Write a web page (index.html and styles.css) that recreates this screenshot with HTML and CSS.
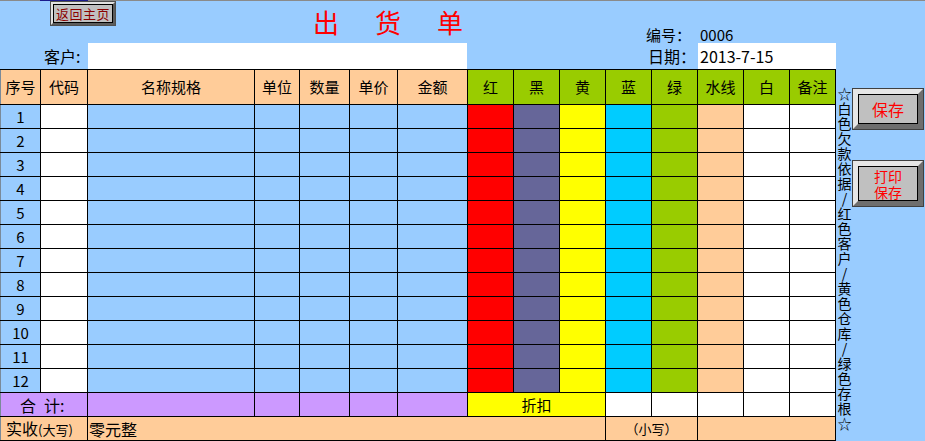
FILE: index.html
```html
<!DOCTYPE html>
<html lang="zh-CN">
<head>
<meta charset="utf-8">
<title>出货单</title>
<link rel="stylesheet" href="styles.css">
</head>
<body>
<div class="topline"><span class="navy"></span></div>
<div class="page">
  <div class="sheet">
    <div class="rowa">
      <div class="btn-home"><span class="face">返回主页</span></div>
      <div class="title">出货单</div>
      <div class="no"><span class="lab">编号：</span><span class="val">0006</span></div>
    </div>
    <div class="rowb">
      <div class="cust-lab">客户:</div>
      <div class="cust-box"></div>
      <div class="date-lab">日期：</div>
      <div class="date-box">2013-7-15</div>
    </div>
    <table class="grid">
      <colgroup>
        <col><col><col><col><col><col><col><col><col><col><col><col><col><col><col>
      </colgroup>
      <tr class="head">
        <td class="pc">序号</td><td class="pc">代码</td><td class="pc">名称规格</td><td class="pc">单位</td><td class="pc">数量</td><td class="pc">单价</td><td class="pc">金额</td>
        <td class="gr">红</td><td class="gr">黑</td><td class="gr">黄</td><td class="gr">蓝</td><td class="gr">绿</td><td class="gr">水线</td><td class="gr">白</td><td class="gr">备注</td>
      </tr>
      <tr><td class="bl num">1</td><td class="wh"></td><td class="bl"></td><td class="bl"></td><td class="bl"></td><td class="bl"></td><td class="bl"></td><td class="rd"></td><td class="dk"></td><td class="yl"></td><td class="cy"></td><td class="gr"></td><td class="pc"></td><td class="wh"></td><td class="wh"></td></tr>
      <tr><td class="bl num">2</td><td class="wh"></td><td class="bl"></td><td class="bl"></td><td class="bl"></td><td class="bl"></td><td class="bl"></td><td class="rd"></td><td class="dk"></td><td class="yl"></td><td class="cy"></td><td class="gr"></td><td class="pc"></td><td class="wh"></td><td class="wh"></td></tr>
      <tr><td class="bl num">3</td><td class="wh"></td><td class="bl"></td><td class="bl"></td><td class="bl"></td><td class="bl"></td><td class="bl"></td><td class="rd"></td><td class="dk"></td><td class="yl"></td><td class="cy"></td><td class="gr"></td><td class="pc"></td><td class="wh"></td><td class="wh"></td></tr>
      <tr><td class="bl num">4</td><td class="wh"></td><td class="bl"></td><td class="bl"></td><td class="bl"></td><td class="bl"></td><td class="bl"></td><td class="rd"></td><td class="dk"></td><td class="yl"></td><td class="cy"></td><td class="gr"></td><td class="pc"></td><td class="wh"></td><td class="wh"></td></tr>
      <tr><td class="bl num">5</td><td class="wh"></td><td class="bl"></td><td class="bl"></td><td class="bl"></td><td class="bl"></td><td class="bl"></td><td class="rd"></td><td class="dk"></td><td class="yl"></td><td class="cy"></td><td class="gr"></td><td class="pc"></td><td class="wh"></td><td class="wh"></td></tr>
      <tr><td class="bl num">6</td><td class="wh"></td><td class="bl"></td><td class="bl"></td><td class="bl"></td><td class="bl"></td><td class="bl"></td><td class="rd"></td><td class="dk"></td><td class="yl"></td><td class="cy"></td><td class="gr"></td><td class="pc"></td><td class="wh"></td><td class="wh"></td></tr>
      <tr><td class="bl num">7</td><td class="wh"></td><td class="bl"></td><td class="bl"></td><td class="bl"></td><td class="bl"></td><td class="bl"></td><td class="rd"></td><td class="dk"></td><td class="yl"></td><td class="cy"></td><td class="gr"></td><td class="pc"></td><td class="wh"></td><td class="wh"></td></tr>
      <tr><td class="bl num">8</td><td class="wh"></td><td class="bl"></td><td class="bl"></td><td class="bl"></td><td class="bl"></td><td class="bl"></td><td class="rd"></td><td class="dk"></td><td class="yl"></td><td class="cy"></td><td class="gr"></td><td class="pc"></td><td class="wh"></td><td class="wh"></td></tr>
      <tr><td class="bl num">9</td><td class="wh"></td><td class="bl"></td><td class="bl"></td><td class="bl"></td><td class="bl"></td><td class="bl"></td><td class="rd"></td><td class="dk"></td><td class="yl"></td><td class="cy"></td><td class="gr"></td><td class="pc"></td><td class="wh"></td><td class="wh"></td></tr>
      <tr><td class="bl num">10</td><td class="wh"></td><td class="bl"></td><td class="bl"></td><td class="bl"></td><td class="bl"></td><td class="bl"></td><td class="rd"></td><td class="dk"></td><td class="yl"></td><td class="cy"></td><td class="gr"></td><td class="pc"></td><td class="wh"></td><td class="wh"></td></tr>
      <tr><td class="bl num">11</td><td class="wh"></td><td class="bl"></td><td class="bl"></td><td class="bl"></td><td class="bl"></td><td class="bl"></td><td class="rd"></td><td class="dk"></td><td class="yl"></td><td class="cy"></td><td class="gr"></td><td class="pc"></td><td class="wh"></td><td class="wh"></td></tr>
      <tr><td class="bl num">12</td><td class="wh"></td><td class="bl"></td><td class="bl"></td><td class="bl"></td><td class="bl"></td><td class="bl"></td><td class="rd"></td><td class="dk"></td><td class="yl"></td><td class="cy"></td><td class="gr"></td><td class="pc"></td><td class="wh"></td><td class="wh"></td></tr>
      <tr class="total">
        <td colspan="2" class="pu sum">合&ensp;计:</td><td class="pu"></td><td class="pu"></td><td class="pu"></td><td class="pu"></td><td class="pu"></td>
        <td colspan="3" class="yl zk">折扣</td><td class="wh"></td><td class="wh"></td><td class="wh"></td><td class="wh"></td><td class="wh"></td>
      </tr>
      <tr class="pay">
        <td colspan="2" class="pc paylab">实收<span class="small">(大写)</span></td>
        <td colspan="8" class="pc words">零元整</td>
        <td colspan="2" class="pc lower">（小写）</td>
        <td colspan="3" class="pc"></td>
      </tr>
    </table>
  </div>
  <aside class="side">
    <div class="vtext">
      <span>☆</span><span>白</span><span>色</span><span>欠</span><span>款</span><span>依</span><span>据</span><span>/</span><span>红</span><span>色</span><span>客</span><span>户</span><span>/</span><span>黄</span><span>色</span><span>仓</span><span>库</span><span>/</span><span>绿</span><span>色</span><span>存</span><span>根</span><span>☆</span>
    </div>
    <div class="btns">
      <div class="bigbtn save"><span class="face">保存</span></div>
      <div class="bigbtn print"><span class="face">打印<br>保存</span></div>
    </div>
  </aside>
</div>
</body>
</html>
```
FILE: styles.css
```css
html, body {
  margin: 0;
  padding: 0;
}
body {
  background: #99ccff;
  font-family: "Noto Sans CJK SC", "Noto Sans", sans-serif;
  color: #000;
  width: 925px;
  height: 441px;
  overflow: hidden;
}
.topline {
  height: 1px;
  background: #8a8a8a;
  display: flex;
}
.navy {
  margin-left: 40px;
  width: 48px;
  background: #1a1a8c;
}
.page {
  display: flex;
}
.sheet {
  width: 836px;
  flex: none;
}
.rowa {
  height: 42px;
  display: flex;
  align-items: flex-start;
}
.btn-home {
  margin-left: 50px;
  width: 66px;
  height: 25px;
  box-sizing: border-box;
  border: 3px solid;
  border-color: #e2e2e2 #5c5c5c #5c5c5c #e2e2e2;
  outline: 1px solid #505050;
  outline-offset: -1px;
  display: flex;
}
.btn-home .face {
  flex: 1;
  background: #c0c0c0;
  border: 1px solid #000;
  color: #8b0000;
  font-size: 13px;
  line-height: 17px;
  text-align: center;
  letter-spacing: 0.5px;
}
.title {
  margin-left: 195px;
  margin-top: 7px;
  width: 335px;
  color: #ff0000;
  font-size: 26px;
  line-height: 28px;
  letter-spacing: 36px;
  padding-left: 2px;
  box-sizing: border-box;
}
.no {
  align-self: flex-end;
  font-size: 15px;
  line-height: 16px;
  display: flex;
}
.no .lab {
  width: 54px;
}
.rowb {
  height: 26px;
  display: flex;
}
.cust-lab {
  width: 44px;
  padding-left: 44px;
  font-size: 16px;
  line-height: 26px;
}
.cust-box {
  width: 379px;
  background: #fff;
}
.date-lab {
  margin-left: 181px;
  width: 50px;
  font-size: 16px;
  line-height: 26px;
}
.date-box {
  width: 136px;
  padding-left: 2px;
  background: #fff;
  font-size: 16px;
  line-height: 26px;
}
.grid {
  border-collapse: collapse;
  table-layout: fixed;
  width: 836px;
}
.grid col:nth-child(1) { width: 40px; }
.grid col:nth-child(2) { width: 47px; }
.grid col:nth-child(3) { width: 167px; }
.grid col:nth-child(4) { width: 45px; }
.grid col:nth-child(5) { width: 50px; }
.grid col:nth-child(6) { width: 48px; }
.grid col:nth-child(7) { width: 70px; }
.grid col:nth-child(n+8) { width: 46px; }
.grid td {
  border: 1px solid #000;
  padding: 0;
  height: 23px;
  font-size: 15px;
  line-height: 20px;
  text-align: center;
  white-space: nowrap;
  overflow: hidden;
}
.grid tr td:first-child {
  border-left-color: #7a8a9a;
}
.grid .head td {
  height: 34px;
}
.pc { background: #ffcc99; }
.gr { background: #99cc00; }
.bl { background: #99ccff; }
.wh { background: #ffffff; }
.rd { background: #ff0000; }
.dk { background: #666699; }
.yl { background: #ffff00; }
.cy { background: #00ccff; }
.pu { background: #cc99ff; }
.grid .sum {
  font-size: 16px;
  text-align: left;
  padding-left: 19px;
}
.grid .zk {
  font-size: 15px;
}
.grid .paylab {
  text-align: left;
  padding-left: 5px;
  font-size: 16px;
}
.small {
  font-size: 13px;
}
.grid .words {
  text-align: left;
  padding-left: 1px;
  font-size: 16px;
}
.grid .lower {
  font-size: 13px;
}
.side {
  width: 89px;
  flex: none;
  display: flex;
}
.vtext {
  margin-top: 85px;
  margin-left: 1px;
  width: 15px;
  flex: none;
  display: flex;
  flex-direction: column;
  font-size: 14px;
  line-height: 15px;
}
.vtext span {
  height: 15px;
  text-align: center;
}
.btns {
  display: flex;
  flex-direction: column;
  width: 72px;
  flex: none;
}
.bigbtn {
  box-sizing: border-box;
  border: 6px solid;
  border-color: #e6e6e6 #6e6e6e #6e6e6e #e6e6e6;
  outline: 1px solid #404040;
  outline-offset: -1px;
  display: flex;
}
.bigbtn .face {
  flex: 1;
  background: #c0c0c0;
  border: 1px solid #000;
  color: #ff0000;
  display: flex;
  align-items: center;
  justify-content: center;
  text-align: center;
}
.save {
  margin-top: 87px;
  height: 42px;
}
.save .face {
  font-size: 16px;
  line-height: 18px;
}
.print {
  margin-top: 30px;
  height: 47px;
}
.print .face {
  font-size: 14px;
  line-height: 16px;
}
```
